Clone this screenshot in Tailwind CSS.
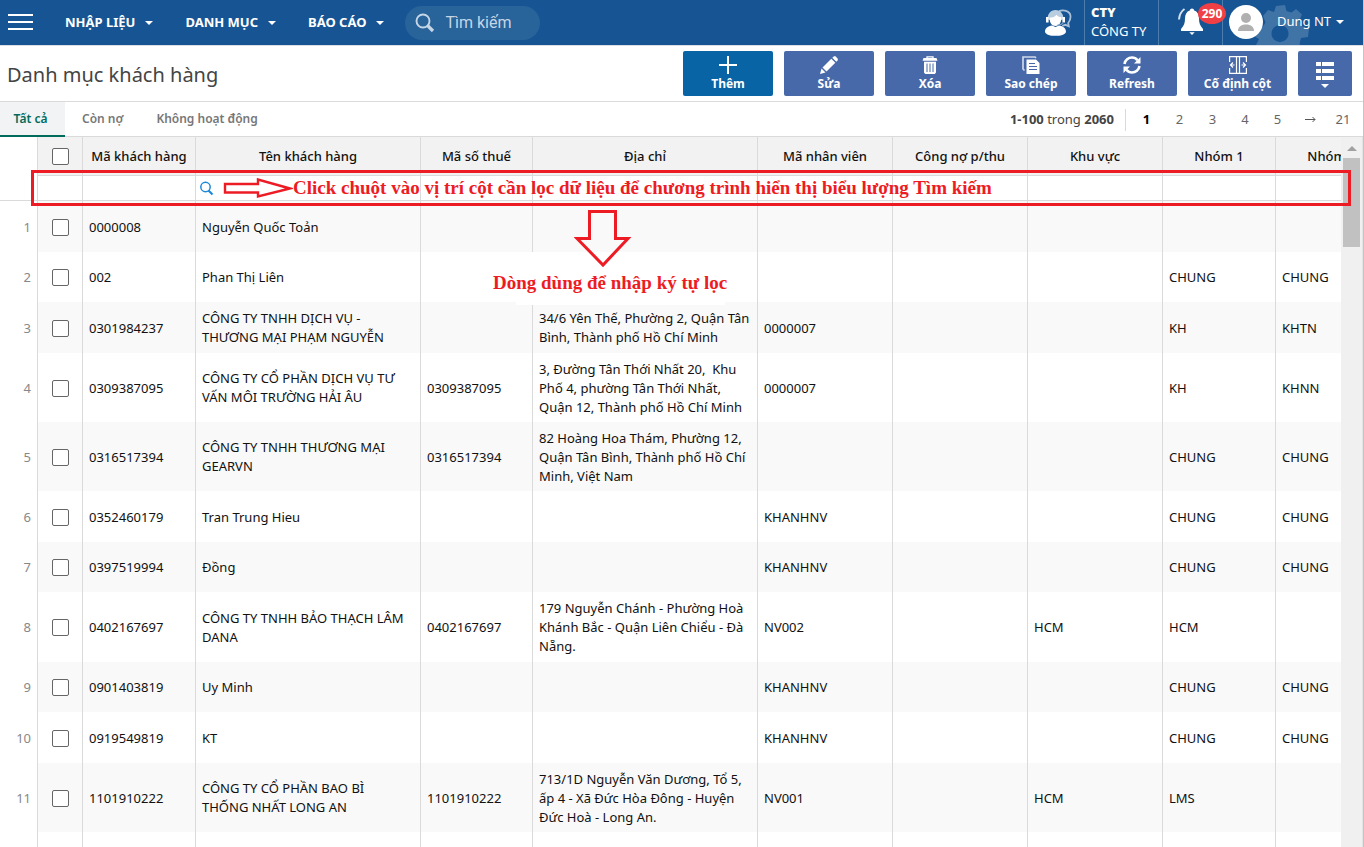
<!DOCTYPE html>
<html lang="vi">
<head>
<meta charset="utf-8">
<title>Danh mục khách hàng</title>
<script src="https://cdn.jsdelivr.net/npm/@tailwindcss/browser@4"></script>
</head>
<body class="flex h-screen flex-col overflow-hidden border-r border-[#c4c4c4] bg-white font-['Noto_Sans',sans-serif] text-[13px] text-[#111]">

<header class="flex h-[46px] shrink-0 items-stretch border-b border-[#dcdfe6] bg-[#175493] text-white">
  <button type="button" aria-label="Menu" class="ml-2 flex w-[25px] flex-col justify-center gap-[5px] pb-[2px]">
    <span class="block h-[2px] w-full bg-white"></span>
    <span class="block h-[2px] w-full bg-white"></span>
    <span class="block h-[2px] w-full bg-white"></span>
  </button>
  <nav class="ml-8 flex items-center gap-8 pt-px text-[13px] font-bold whitespace-nowrap">
    <a href="#" class="flex items-center gap-[10px]">NHẬP LIỆU<span class="border-x-4 border-t-4 border-x-transparent border-t-white"></span></a>
    <a href="#" class="flex items-center gap-[10px]">DANH MỤC<span class="border-x-4 border-t-4 border-x-transparent border-t-white"></span></a>
    <a href="#" class="flex items-center gap-[10px]">BÁO CÁO<span class="border-x-4 border-t-4 border-x-transparent border-t-white"></span></a>
  </nav>
  <label class="mt-[6px] mb-[5px] ml-[21px] flex w-[135px] items-center rounded-full bg-[#28639a] pl-[10px]">
    <svg class="size-[20px] shrink-0" viewBox="0 0 20 20" fill="none" stroke="#c5d6e6"><circle cx="8" cy="8" r="6.500" stroke-width="1.900"/><path d="M12.500 12.500L18 18" stroke-width="3.200"/></svg>
    <input type="text" aria-label="Tìm kiếm" placeholder="Tìm kiếm" class="ml-[10px] w-full min-w-0 bg-transparent font-['Roboto'] text-[16px] text-white outline-none placeholder:text-[#c5d6e6]">
  </label>
  <div class="ml-auto flex items-stretch">
    <button type="button" aria-label="Hỗ trợ" class="mr-3 flex items-center pb-px">
      <svg class="h-[27px] w-[28px]" viewBox="0 0 28 27"><path d="M15 2.200C19 .5 26 1.500 26.500 7c.2 3-1 5.500-2.300 7l.6 3.200-3.500-1.400-3 1" fill="none" stroke="#a9c0d8" stroke-width="1.800"/><path d="M1 23c0-4 3-6 7-6.500l3.500 1.500 3.500-1.500c4 .5 7 2.500 7 6.500-1 3-5.500 3.800-10.500 3.800S2 26 1 23z" fill="#fff"/><path d="M3.500 10c0-5 3-9 8-9s8 4 8 9l-2 1H5.500z" fill="#b9cde0"/><path d="M5.500 8.500c3.500 0 5.500-.8 7-2.800 1 1.500 2.500 2.300 5 2.600 0 5-2.200 8.700-6 8.700s-6-3.500-6-8.500z" fill="#fff"/><path d="M3.300 8v5.500M19.700 8v5.500" fill="none" stroke="#fff" stroke-width="2.600"/><path d="M19.500 13c-1 2.200-3 3-6 3" fill="none" stroke="#7d9fc2" stroke-width="1.200"/></svg>
    </button>
    <div class="flex w-[74px] flex-col justify-center border-l border-[#4d7dad] pb-[2px] pl-[6px] leading-[19px] whitespace-nowrap"><b class="font-black">CTY</b><span>CÔNG TY</span></div>
    <button type="button" aria-label="Thông báo" class="relative flex w-[64px] border-l border-[#4d7dad] pt-[7px] pl-[19px]">
      <svg class="h-[28px] w-[27px]" viewBox="0 0 27 28"><path d="M14 1.500c-1.200 0-2 .8-2.200 2C8.500 4.500 7 7.500 7 11.500c0 4.500-1 7-4 10.500v2h22v-2c-3-3.500-4-6-4-10.500 0-4-1.500-7-4.800-8-.2-1.200-1-2-2.200-2z" fill="#fff"/><path d="M11.300 25.200h5.400L14 28z" fill="#fff"/><path d="M6.500 2C3 4.500 1.300 8 1 12.500" fill="none" stroke="#d5e0ec" stroke-width="2"/></svg>
      <span class="absolute top-[3px] left-[39px] z-10 flex h-[21px] w-[28px] items-center justify-center rounded-[50%] bg-[#f04046] text-[12px] font-bold">290</span>
    </button>
    <button type="button" class="relative flex items-center border-l border-[#4d7dad] pr-[19px] pb-px pl-[6px] text-[13px] whitespace-nowrap">
      <svg class="absolute top-[4px] left-[31px] h-[41px] w-[56px]" viewBox="0 0 56 41"><path fill-rule="evenodd" fill="#4073a6" d="M22 2l9-1 1.500 6 5 1.500L42 5l6 5.500-3 6.500 2.500 5 7.500 2.500L54 33l-7 1-1.500 6 1 1H2l3-6-5-3 2-9 7-.5 2.500-4L9 12l5-6 6 2zM26 21a8.500 8.500 0 1 0 .01 0z"/></svg>
      <svg class="relative size-[34px]" viewBox="0 0 34 34"><circle cx="17" cy="17" r="17" fill="#fff"/><circle cx="17" cy="13" r="5" fill="#b0b0b0"/><path d="M9 26c0-4 3-6.500 8-6.500s8 2.500 8 6.500z" fill="#b0b0b0"/></svg>
      <span class="relative ml-[14px]">Dung NT</span>
      <span class="relative ml-[5px] border-x-4 border-t-4 border-x-transparent border-t-white"></span>
    </button>
  </div>
</header>

<div class="flex h-[56px] shrink-0 items-center border-b border-[#dadada]">
  <h1 class="ml-[7px] pt-[2px] text-xl whitespace-nowrap text-[#444]">Danh mục khách hàng</h1>
  <div class="mr-[11px] ml-auto flex gap-[11px] text-xs font-bold text-white">
    <button type="button" class="flex h-[45px] w-[90px] flex-col items-center gap-[2px] rounded-xs bg-[#0864a4] pt-[5px] whitespace-nowrap">
      <svg class="size-[18px] shrink-0" viewBox="0 0 18 18" stroke="#fff" stroke-width="2"><path d="M9 0v18M0 9h18"/></svg>Thêm</button>
    <button type="button" class="flex h-[45px] w-[90px] flex-col items-center gap-[2px] rounded-xs bg-[#4769a9] pt-[5px] whitespace-nowrap">
      <svg class="size-[18px] shrink-0" viewBox="0 0 18 18" fill="#fff"><path d="M0 18l1.500-5.500 4 4zM2.500 11.500l8.800-8.700 4 4-8.800 8.700zM12.300 1.800L14 .3h1.500l2.300 2.400v1.500L16.300 5.700z"/></svg>Sửa</button>
    <button type="button" class="flex h-[45px] w-[90px] flex-col items-center gap-[2px] rounded-xs bg-[#4769a9] pt-[5px] whitespace-nowrap">
      <svg class="size-[18px] shrink-0" viewBox="0 0 18 18"><path d="M6 2.200V.8h6v1.400" fill="none" stroke="#fff" stroke-width="1.300"/><path d="M1.500 4.800L2.500 2h13l1 2.800zM3 5.800h12V16.500L13.800 18H4.200L3 16.500z" fill="#fff"/><path d="M6 7.500V16M9 7.500V16M12 7.500V16" stroke="#4769a9"/></svg>Xóa</button>
    <button type="button" class="flex h-[45px] w-[90px] flex-col items-center gap-[2px] rounded-xs bg-[#4769a9] pt-[5px] whitespace-nowrap">
      <svg class="size-[18px] shrink-0" viewBox="0 0 18 18"><path d="M2.500 14.500L1 13V1h12l1 1" fill="none" stroke="#cfd9ea" stroke-width="1.700"/><path d="M4.500 3.500h9.500L17.500 7v11h-13z" fill="#fff"/><path d="M7 7.500h6M7 10.500h8M7 13.500h8" stroke="#4769a9"/></svg>Sao chép</button>
    <button type="button" class="flex h-[45px] w-[90px] flex-col items-center gap-[2px] rounded-xs bg-[#4769a9] pt-[5px] whitespace-nowrap">
      <svg class="size-[18px] shrink-0" viewBox="0 0 18 18"><path d="M1.500 8C2 4 5.500 1.500 9 1.500c2.200 0 4.200 1 5.500 2.700M16.500 10c-.5 4-4 6.500-7.500 6.500-2.200 0-4.200-1-5.500-2.700" fill="none" stroke="#fff" stroke-width="2.600"/><path d="M17.500 1v6.500H11zM.5 17v-6.500H7z" fill="#fff"/></svg>Refresh</button>
    <button type="button" class="flex h-[45px] w-[99px] flex-col items-center gap-[2px] rounded-xs bg-[#4769a9] pt-[5px] whitespace-nowrap">
      <svg class="size-[18px] shrink-0" viewBox="0 0 18 18" fill="none" stroke="#fff" stroke-width="1.200"><path d="M.6 6V.6h16.800V6M.6 12v5.400h16.800V12M7.500 1v16M10.500 1v16M5.500 9H1M4 6.500L1.500 9 4 11.500M12.500 9H17M14 6.500L16.500 9 14 11.500"/></svg>Cố định cột</button>
    <button type="button" aria-label="Tùy chọn" class="flex h-[45px] w-[54px] flex-col items-center gap-1 rounded-xs bg-[#4769a9] pt-[11px]">
      <svg class="size-[18px] shrink-0" viewBox="0 0 18 18" fill="#fff"><path d="M0 0h5v4H0zM6 0h12v4H6zM0 7h5v4H0zM6 7h12v4H6zM0 14h5v4H0zM6 14h12v4H6z"/></svg>
      <span class="border-x-4 border-t-4 border-x-transparent border-t-white"></span></button>
  </div>
</div>

<div class="flex h-[35px] shrink-0 border-b border-[#dadada] text-xs font-semibold whitespace-nowrap text-[#777]">
  <a href="#" class="-mb-px flex w-[65px] items-center justify-center border-b-2 border-[#006b5b] bg-[#f2f3f5] pr-1 text-[#006b5b]">Tất cả</a>
  <a href="#" class="ml-[17px] flex items-center">Còn nợ</a>
  <a href="#" class="ml-[33px] flex items-center">Không hoạt động</a>
  <div class="ml-auto flex items-center pt-px text-[13px] font-normal text-[#444]">
    <p class="pr-[11px]"><b>1-100</b> trong <b>2060</b></p>
    <nav aria-label="Phân trang" class="mr-1 flex h-[22px] items-center border-l border-[#dadada] text-center text-[#666]">
      <a href="#" class="ml-1 w-[33px] font-bold text-black">1</a>
      <a href="#" class="w-[33px]">2</a>
      <a href="#" class="w-[33px]">3</a>
      <a href="#" class="w-[32px]">4</a>
      <a href="#" class="w-[33px]">5</a>
      <a href="#" aria-label="Trang sau" class="flex w-[33px] justify-center"><svg class="h-[7px] w-[11px]" viewBox="0 0 11 7" fill="none" stroke="#555"><path d="M0 3.500h10M7.500 1L10 3.500 7.500 6"/></svg></a>
      <a href="#" class="w-[32px]">21</a>
    </nav>
  </div>
</div>

<main class="relative flex min-h-0 flex-1">
  <div class="min-w-0 flex-1 overflow-hidden">
    <table class="w-[1389px] table-fixed border-separate border-spacing-0 leading-[19px] whitespace-nowrap [&_td]:border-r [&_td]:border-[#dadada] [&_td]:px-[6px] [&_td]:py-0 [&_tbody_td]:pt-px [&_td:first-child]:bg-white [&_td:first-child]:text-right [&_td:first-child]:text-[#888] [&_td:nth-child(2)]:px-0 [&_th]:border-r [&_th]:border-[#dadada] [&_th]:p-0 [&_th]:pt-px [&_input[type=checkbox]]:mx-auto [&_input[type=checkbox]]:block [&_input[type=checkbox]]:size-[17px] [&_input[type=checkbox]]:appearance-none [&_input[type=checkbox]]:rounded-[2px] [&_input[type=checkbox]]:border [&_input[type=checkbox]]:border-[#666] [&_input[type=checkbox]]:bg-white">
      <colgroup><col class="w-[38px]"><col class="w-[45px]"><col class="w-[113px]"><col class="w-[225px]"><col class="w-[112px]"><col class="w-[225px]"><col class="w-[135px]"><col class="w-[135px]"><col class="w-[135px]"><col class="w-[113px]"><col class="w-[113px]"></colgroup>
      <thead>
        <tr class="h-[39px] bg-[#f2f2f2] [&>th]:font-medium [&>th:not(:first-child)]:border-b">
          <th class="bg-white"></th><th><input type="checkbox" aria-label="Chọn tất cả"></th><th>Mã khách hàng</th><th>Tên khách hàng</th><th>Mã số thuế</th><th>Địa chỉ</th><th>Mã nhân viên</th><th>Công nợ p/thu</th><th>Khu vực</th><th>Nhóm 1</th><th>Nhóm 2</th>
        </tr>
        <tr class="h-[25px] [&>td]:border-b [&_input]:block [&_input]:h-6 [&_input]:w-full [&_input]:outline-none">
          <td></td><td></td>
          <td><input type="text" aria-label="Lọc mã khách hàng"></td>
          <td><div class="-ml-[3px] flex items-center"><svg class="size-[15px] shrink-0" viewBox="0 0 15 15" fill="none" stroke="#1e88d8"><circle cx="6.500" cy="6" r="4.700" stroke-width="1.500"/><path d="M9.500 9.500l4 4" stroke-width="2.200"/></svg><input type="text" aria-label="Lọc tên khách hàng"></div></td>
          <td><input type="text" aria-label="Lọc mã số thuế"></td>
          <td><input type="text" aria-label="Lọc địa chỉ"></td>
          <td><input type="text" aria-label="Lọc mã nhân viên"></td>
          <td><input type="text" aria-label="Lọc công nợ"></td>
          <td><input type="text" aria-label="Lọc khu vực"></td>
          <td><input type="text" aria-label="Lọc nhóm 1"></td>
          <td><input type="text" aria-label="Lọc nhóm 2"></td>
        </tr>
      </thead>
      <tbody class="[&>tr:nth-child(odd)]:bg-[#f9f9f9]">
        <tr class="h-[51px]"><td>1</td><td><input type="checkbox" aria-label="Chọn dòng 1"></td><td>0000008</td><td>Nguyễn Quốc Toản</td><td></td><td></td><td></td><td></td><td></td><td></td><td></td></tr>
        <tr class="h-[50px]"><td>2</td><td><input type="checkbox" aria-label="Chọn dòng 2"></td><td>002</td><td>Phan Thị Liên</td><td></td><td></td><td></td><td></td><td></td><td>CHUNG</td><td>CHUNG</td></tr>
        <tr class="h-[51px]"><td>3</td><td><input type="checkbox" aria-label="Chọn dòng 3"></td><td>0301984237</td><td>CÔNG TY TNHH DỊCH VỤ -<br>THƯƠNG MẠI PHẠM NGUYỄN</td><td></td><td>34/6 Yên Thế, Phường 2, Quận Tân<br>Bình, Thành phố Hồ Chí Minh</td><td>0000007</td><td></td><td></td><td>KH</td><td>KHTN</td></tr>
        <tr class="h-[69px]"><td>4</td><td><input type="checkbox" aria-label="Chọn dòng 4"></td><td>0309387095</td><td>CÔNG TY CỔ PHẦN DỊCH VỤ TƯ<br>VẤN MÔI TRƯỜNG HẢI ÂU</td><td>0309387095</td><td>3, Đường Tân Thới Nhất 20,&nbsp; Khu<br>Phố 4, phường Tân Thới Nhất,<br>Quận 12, Thành phố Hồ Chí Minh</td><td>0000007</td><td></td><td></td><td>KH</td><td>KHNN</td></tr>
        <tr class="h-[69px]"><td>5</td><td><input type="checkbox" aria-label="Chọn dòng 5"></td><td>0316517394</td><td>CÔNG TY TNHH THƯƠNG MẠI<br>GEARVN</td><td>0316517394</td><td>82 Hoàng Hoa Thám, Phường 12,<br>Quận Tân Bình, Thành phố Hồ Chí<br>Minh, Việt Nam</td><td></td><td></td><td></td><td>CHUNG</td><td>CHUNG</td></tr>
        <tr class="h-[51px]"><td>6</td><td><input type="checkbox" aria-label="Chọn dòng 6"></td><td>0352460179</td><td>Tran Trung Hieu</td><td></td><td></td><td>KHANHNV</td><td></td><td></td><td>CHUNG</td><td>CHUNG</td></tr>
        <tr class="h-[50px]"><td>7</td><td><input type="checkbox" aria-label="Chọn dòng 7"></td><td>0397519994</td><td>Đồng</td><td></td><td></td><td>KHANHNV</td><td></td><td></td><td>CHUNG</td><td>CHUNG</td></tr>
        <tr class="h-[70px]"><td>8</td><td><input type="checkbox" aria-label="Chọn dòng 8"></td><td>0402167697</td><td>CÔNG TY TNHH BẢO THẠCH LÂM<br>DANA</td><td>0402167697</td><td>179 Nguyễn Chánh - Phường Hoà<br>Khánh Bắc - Quận Liên Chiểu - Đà<br>Nẵng.</td><td>NV002</td><td></td><td>HCM</td><td>HCM</td><td></td></tr>
        <tr class="h-[50px]"><td>9</td><td><input type="checkbox" aria-label="Chọn dòng 9"></td><td>0901403819</td><td>Uy Minh</td><td></td><td></td><td>KHANHNV</td><td></td><td></td><td>CHUNG</td><td>CHUNG</td></tr>
        <tr class="h-[51px]"><td>10</td><td><input type="checkbox" aria-label="Chọn dòng 10"></td><td>0919549819</td><td>KT</td><td></td><td></td><td>KHANHNV</td><td></td><td></td><td>CHUNG</td><td>CHUNG</td></tr>
        <tr class="h-[69px]"><td>11</td><td><input type="checkbox" aria-label="Chọn dòng 11"></td><td>1101910222</td><td>CÔNG TY CỔ PHẦN BAO BÌ<br>THỐNG NHẤT LONG AN</td><td>1101910222</td><td>713/1D Nguyễn Văn Dương, Tổ 5,<br>ấp 4 - Xã Đức Hòa Đông - Huyện<br>Đức Hoà - Long An.</td><td>NV001</td><td></td><td>HCM</td><td>LMS</td><td></td></tr>
        <tr class="h-[50px] [&>td]:bg-white"><td></td><td></td><td></td><td></td><td></td><td></td><td></td><td></td><td></td><td></td><td></td></tr>
      </tbody>
    </table>
  </div>
  <!-- Scroll bar -->
  <div class="flex w-[22px] shrink-0 flex-col items-center border-r border-[#e3e3e3] bg-[#f0f0f0]">
    <span class="mt-[9px] border-x-[5px] border-b-[5px] border-x-transparent border-b-[#a0a0a0]"></span>
    <span class="mt-[7px] h-[89px] w-[17px] bg-[#c1c1c1]"></span>
  </div>

  <!-- Guide notes drawn over the grid -->
  <div class="pointer-events-none absolute top-[33px] right-[12px] left-[31px] h-[36px] border-3 border-[#ed1c24]"></div>
  <div class="pointer-events-none absolute top-[41px] left-[223px] flex h-[21px] items-center font-['Liberation_Serif',serif] text-[19px] font-bold whitespace-nowrap text-[#ed1c24]">
    <svg class="h-[21px] w-[70px]" viewBox="0 0 70 21" fill="#fff" stroke="#ed1c24" stroke-width="2.400"><path d="M2 6h33V1.500L67 10.500 35 18.500V14.500H2z"/></svg>
    <p>Click chuột vào vị trí cột cần lọc dữ liệu để chương trình hiển thị biểu lượng Tìm kiếm</p>
  </div>
  <div class="pointer-events-none absolute top-[115px] left-[516px] h-[53px] w-[209px] bg-white"></div>
  <div class="pointer-events-none absolute top-[73px] left-[493px] flex flex-col gap-px font-['Liberation_Serif',serif] text-[19px] font-bold whitespace-nowrap text-[#ed1c24]">
    <svg class="ml-[81px] h-[58px] w-[58px]" viewBox="0 0 58 58" stroke="#ed1c24" fill="none" stroke-width="3"><path d="M15.500 1.500h26v27H54L29 55 3 28.500h12.500z"/></svg>
    <p>Dòng dùng để nhập ký tự lọc</p>
  </div>
</main>
</body>
</html>
